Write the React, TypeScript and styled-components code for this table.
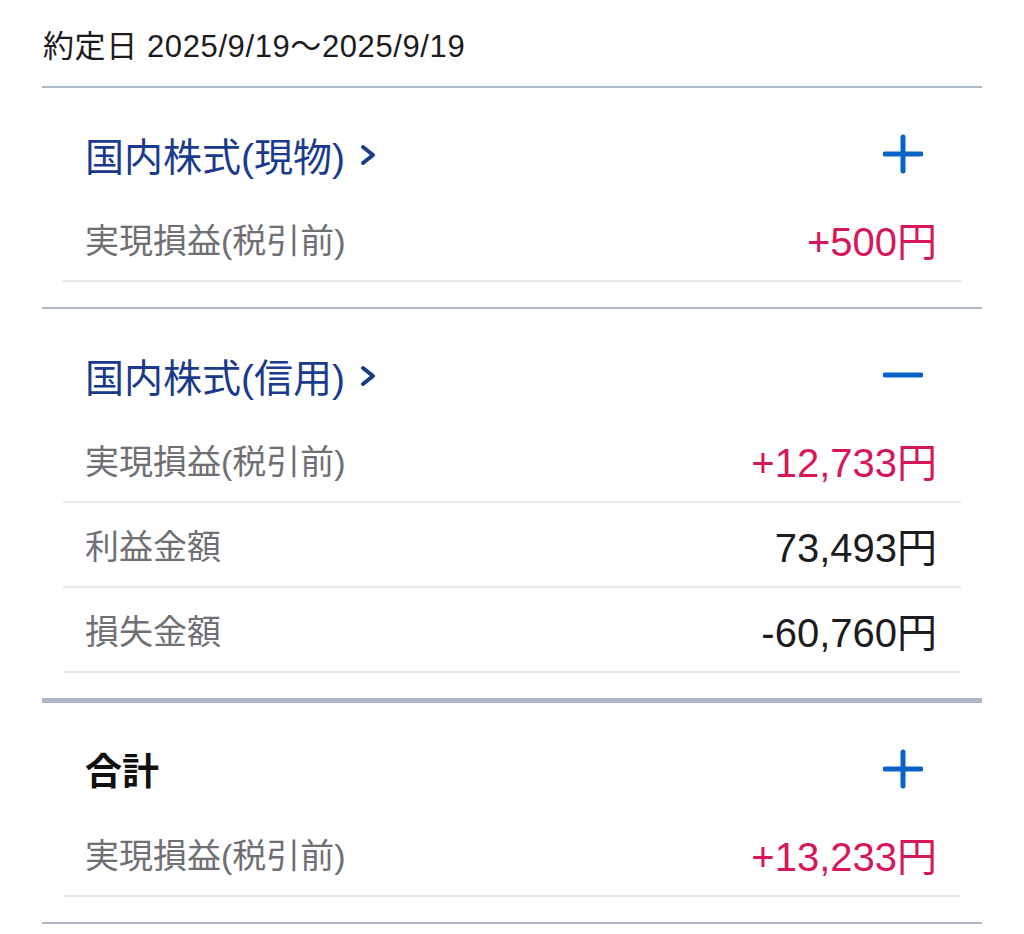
import styled, { createGlobalStyle } from "styled-components";

const GlobalStyle = createGlobalStyle`
  body {
    margin: 0;
    background: #ffffff;
    font-family: "Liberation Sans", "Noto Sans CJK JP", sans-serif;
    color: #1c1c1e;
  }
`;

type Tone = "plus" | "plain";

interface RowData {
  label: string;
  value: string;
  tone: Tone;
}

interface SectionData {
  title: string;
  link: boolean;
  open: boolean;
  rows: RowData[];
}

const sections: SectionData[] = [
  {
    title: "国内株式(現物)",
    link: true,
    open: false,
    rows: [{ label: "実現損益(税引前)", value: "+500円", tone: "plus" }],
  },
  {
    title: "国内株式(信用)",
    link: true,
    open: true,
    rows: [
      { label: "実現損益(税引前)", value: "+12,733円", tone: "plus" },
      { label: "利益金額", value: "73,493円", tone: "plain" },
      { label: "損失金額", value: "-60,760円", tone: "plain" },
    ],
  },
  {
    title: "合計",
    link: false,
    open: false,
    rows: [{ label: "実現損益(税引前)", value: "+13,233円", tone: "plus" }],
  },
];

const Chevron = () => (
  <ChevronIcon width="20" height="24" viewBox="0 0 20 24">
    <polyline
      points="4,4 14,12 4,20"
      fill="none"
      stroke="currentColor"
      strokeWidth="4"
      strokeLinecap="round"
      strokeLinejoin="round"
    />
  </ChevronIcon>
);

const ToggleIcon = ({ open }: { open: boolean }) => (
  <svg width="40" height="40" viewBox="0 0 40 40">
    <line x1="2" y1="20" x2="38" y2="20" stroke="#0a64c8" strokeWidth="5" strokeLinecap="round" />
    {!open && <line x1="20" y1="3" x2="20" y2="37" stroke="#0a64c8" strokeWidth="5" strokeLinecap="round" />}
  </svg>
);

export default function App() {
  return (
    <>
      <GlobalStyle />
      <Page>
        <DateLine>約定日 2025/9/19〜2025/9/19</DateLine>
        {sections.map((s, i) => (
          <Section key={s.title} $heavy={i === 2} $closed={i === sections.length - 1}>
            <Header>
              <Title $link={s.link}>
                {s.title}
                {s.link && <Chevron />}
              </Title>
              <ToggleIcon open={s.open} />
            </Header>
            {s.rows.map((r) => (
              <Row key={r.label}>
                <Label>{r.label}</Label>
                <Value $tone={r.tone}>{r.value}</Value>
              </Row>
            ))}
          </Section>
        ))}
      </Page>
    </>
  );
}

const Page = styled.div`
  padding: 0 42px;
`;

const DateLine = styled.div`
  height: 86px;
  display: flex;
  align-items: center;
  padding-left: 1px;
  font-size: 31px;
  letter-spacing: 0.6px;
  color: #1c1c1e;
`;

const Section = styled.section<{ $heavy: boolean; $closed: boolean }>`
  border-top: ${(p) => (p.$heavy ? "5px" : "2px")} solid #afb6c7;
  border-bottom: ${(p) => (p.$closed ? "2px solid #afb6c7" : "none")};
  padding-bottom: 25px;
`;

const Header = styled.div`
  display: flex;
  align-items: center;
  justify-content: space-between;
  height: 44px;
  padding: 44px 59px 21px 43px;
`;

const Title = styled.div<{ $link: boolean }>`
  display: flex;
  align-items: center;
  gap: 14px;
  font-size: ${(p) => (p.$link ? "39px" : "37px")};
  font-weight: ${(p) => (p.$link ? 400 : 700)};
  color: ${(p) => (p.$link ? "#1a3b8c" : "#111111")};
`;

const ChevronIcon = styled.svg`
  color: #1a3b8c;
  margin-top: 2px;
`;

const Row = styled.div`
  display: flex;
  align-items: center;
  justify-content: space-between;
  height: 83px;
  margin: 0 21px;
  padding: 0 24px 0 22px;
  border-bottom: 2px solid #e6e6eb;
`;

const Label = styled.span`
  font-size: 34px;
  color: #6f6f74;
`;

const Value = styled.span<{ $tone: Tone }>`
  font-size: 40px;
  color: ${(p) => (p.$tone === "plus" ? "#d6175b" : "#1c1c1e")};
`;
